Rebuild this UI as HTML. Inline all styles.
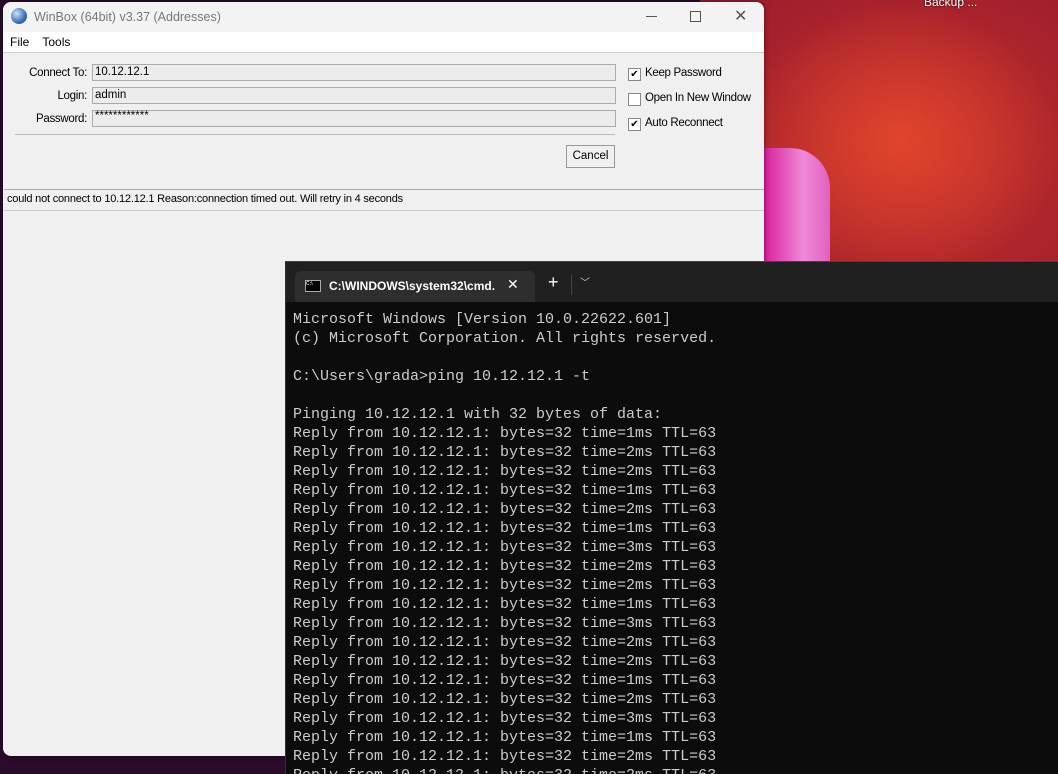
<!DOCTYPE html>
<html><head><style>
html,body{margin:0;width:1058px;height:774px;overflow:hidden}
body{position:relative;background:#2a0b2a;font-family:"Liberation Sans",sans-serif}
.bg{position:absolute;left:700px;top:0;right:0;height:774px;background:
radial-gradient(ellipse 160px 140px at 200px 140px,#e0442c 0%,rgba(210,60,40,0) 100%),
radial-gradient(ellipse 420px 340px at 220px 160px,#c0302c 0%,#a01e2c 60%,#6a1230 100%);}
.pink{position:absolute;left:764px;top:148px;width:66px;height:115px;background:linear-gradient(90deg,#d8209a,#f08ad8 60%,#e060c0);border-radius:0 40px 0 0}
.wb{position:absolute;left:3px;top:2px;width:761px;height:754px;background:#f0f0f0;border-radius:8px;box-shadow:0 0 6px rgba(0,0,0,.5);overflow:hidden;font-size:11.5px;color:#000}
.tb{height:30px;background:#f3f3f3;position:relative}
.tb .t{position:absolute;left:31px;top:8px;color:#777;font-size:12.5px}
.ico{position:absolute;left:8px;top:6px;width:16px;height:16px;border-radius:50%;background:radial-gradient(circle at 35% 35%,#cfe0f5,#3a6fb5 60%,#1d3f7a)}
.menu{height:20px;background:#fff;border-bottom:1px solid #ccc;font-size:12px}
.menu span{display:inline-block;margin:3px 0 0 7px;margin-right:6px}
.lbl{position:absolute;text-align:right;width:84px;left:0;letter-spacing:-.3px}
.in{position:absolute;left:89px;width:520px;height:15px;border:1px solid #aaa;background:#ececec;font-size:11.5px;line-height:15px;padding-left:2px}
.cb{position:absolute;left:625px;width:11px;height:11px;border:1px solid #888;background:#fff;font-size:10px;line-height:11px;text-align:center}
.cbl{position:absolute;left:642px;letter-spacing:-.3px}
.term{position:absolute;left:285px;top:261px;width:773px;height:513px;background:#0c0c0c;border-top:1px solid #444;border-left:1px solid #333;overflow:hidden}
.tabs{height:40px;background:#202020;position:relative}
.tab{position:absolute;left:9px;top:9px;width:240px;height:31px;background:#2e2e2e;border-radius:6px 6px 0 0;color:#fff;font-size:12px;font-weight:bold}
pre{margin:0;position:absolute;left:7px;top:48px;font-family:"Liberation Mono","DejaVu Sans Mono",monospace;font-size:15px;line-height:19px;color:#cccccc}
</style></head><body>
<div class="bg"></div><div class="pink"></div>
<div style="position:absolute;left:924px;top:-5px;color:#fff;font-size:12px;text-shadow:0 0 2px #000">Backup ...</div>
<div class="wb">
 <div class="tb"><div class="ico"></div><div class="t">WinBox (64bit) v3.37 (Addresses)</div>
  <div style="position:absolute;left:643px;top:14px;width:11px;height:1px;background:#555"></div>
  <div style="position:absolute;left:687px;top:9px;width:9px;height:9px;border:1px solid #555"></div>
  <div style="position:absolute;left:731px;top:4px;font-size:16px;color:#555;font-weight:300">✕</div>
 </div>
 <div class="menu"><span>File</span><span>Tools</span></div>
 <div class="lbl" style="top:65px">Connect To:</div><div class="in" style="top:62px">10.12.12.1</div>
 <div class="lbl" style="top:88px">Login:</div><div class="in" style="top:85px">admin</div>
 <div class="lbl" style="top:111px">Password:</div><div class="in" style="top:108px;line-height:10px">************</div>
 <div style="position:absolute;left:12px;top:132px;width:600px;height:1px;background:#bbb"></div>
 <div class="cb" style="top:66px">✔</div><div class="cbl" style="top:65px">Keep Password</div>
 <div class="cb" style="top:91px"></div><div class="cbl" style="top:90px">Open In New Window</div>
 <div class="cb" style="top:116px">✔</div><div class="cbl" style="top:115px">Auto Reconnect</div>
 <div style="position:absolute;left:563px;top:143px;width:47px;height:21px;border:1px solid #999;background:#f0f0f0;text-align:center;line-height:21px">Cancel</div>
 <div style="position:absolute;left:1px;top:187px;width:758px;height:20px;border-top:1px solid #aaa;border-bottom:1px solid #ccc;line-height:19px;font-size:11px;padding-left:3px;letter-spacing:-.2px">could not connect to 10.12.12.1 Reason:connection timed out. Will retry in 4 seconds</div>
</div>
<div class="term">
 <div class="tabs"><div class="tab">
  <div style="position:absolute;left:10px;top:9px;width:14px;height:10px;border:1px solid #aaa;background:#000;font-size:5px;color:#ccc">C:\</div>
  <div style="position:absolute;left:34px;top:8px">C:\WINDOWS\system32\cmd.</div>
  <div style="position:absolute;left:212px;top:5px;font-weight:normal;font-size:14px">✕</div>
 </div>
 <div style="position:absolute;left:262px;top:10px;color:#fff;font-size:18px">+</div>
 <div style="position:absolute;left:285px;top:13px;width:1px;height:20px;background:#444"></div>
 <div style="position:absolute;left:294px;top:12px;color:#ccc;font-size:10px">﹀</div>
 </div>
<pre>Microsoft Windows [Version 10.0.22622.601]
(c) Microsoft Corporation. All rights reserved.

C:\Users\grada&gt;ping 10.12.12.1 -t

Pinging 10.12.12.1 with 32 bytes of data:
Reply from 10.12.12.1: bytes=32 time=1ms TTL=63
Reply from 10.12.12.1: bytes=32 time=2ms TTL=63
Reply from 10.12.12.1: bytes=32 time=2ms TTL=63
Reply from 10.12.12.1: bytes=32 time=1ms TTL=63
Reply from 10.12.12.1: bytes=32 time=2ms TTL=63
Reply from 10.12.12.1: bytes=32 time=1ms TTL=63
Reply from 10.12.12.1: bytes=32 time=3ms TTL=63
Reply from 10.12.12.1: bytes=32 time=2ms TTL=63
Reply from 10.12.12.1: bytes=32 time=2ms TTL=63
Reply from 10.12.12.1: bytes=32 time=1ms TTL=63
Reply from 10.12.12.1: bytes=32 time=3ms TTL=63
Reply from 10.12.12.1: bytes=32 time=2ms TTL=63
Reply from 10.12.12.1: bytes=32 time=2ms TTL=63
Reply from 10.12.12.1: bytes=32 time=1ms TTL=63
Reply from 10.12.12.1: bytes=32 time=2ms TTL=63
Reply from 10.12.12.1: bytes=32 time=3ms TTL=63
Reply from 10.12.12.1: bytes=32 time=1ms TTL=63
Reply from 10.12.12.1: bytes=32 time=2ms TTL=63
Reply from 10.12.12.1: bytes=32 time=2ms TTL=63</pre>
</div>
</body></html>
